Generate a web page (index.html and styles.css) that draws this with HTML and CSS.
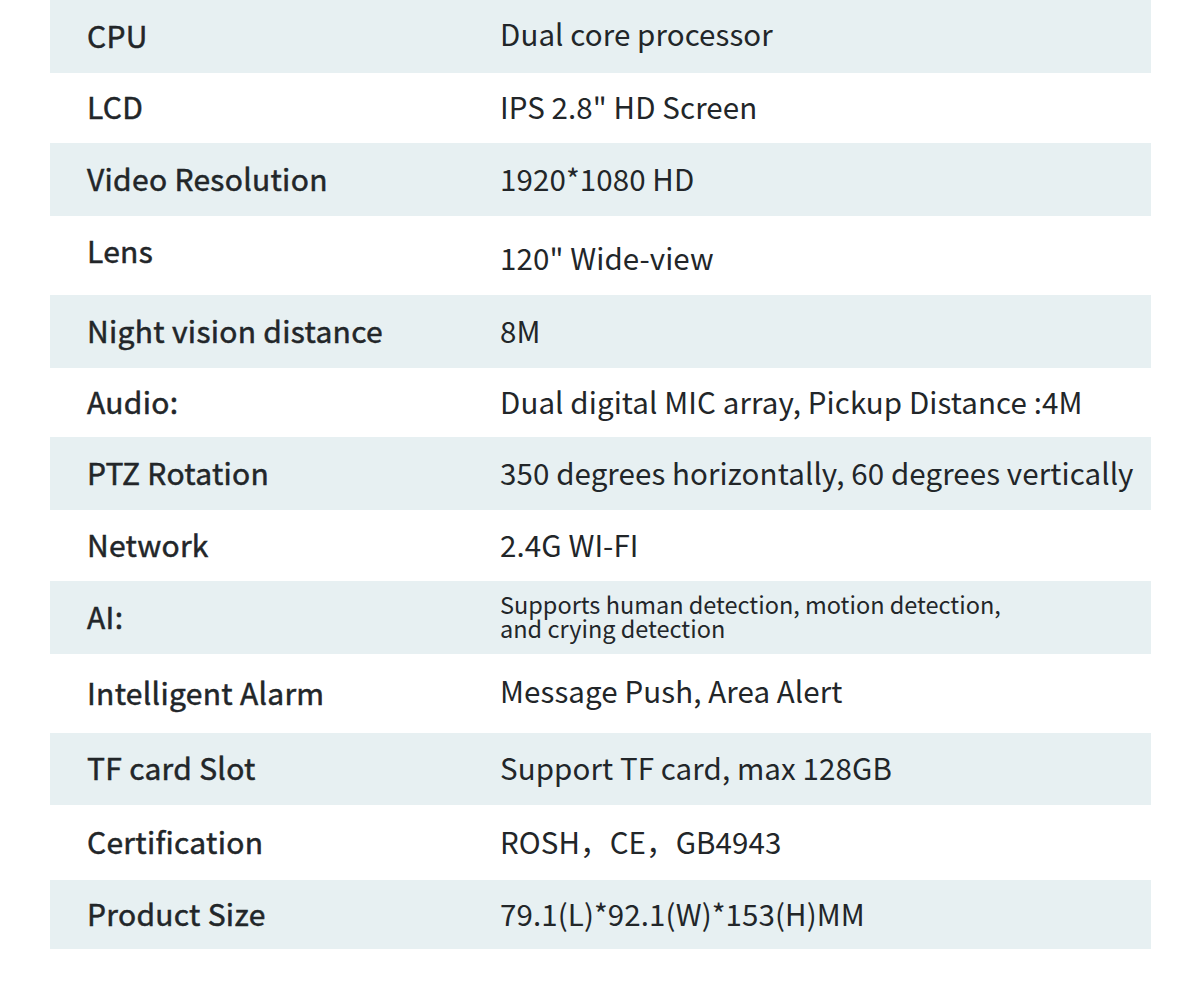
FILE: index.html
```html
<!DOCTYPE html>
<html>
<head>
<meta charset="utf-8">
<link rel="stylesheet" href="styles.css">
</head>
<body>
<div class="spec">
  <div class="row shade h73"><div class="k">CPU</div><div class="v up2">Dual core processor</div></div>
  <div class="row h70"><div class="k">LCD</div><div class="v">IPS 2.8" HD Screen</div></div>
  <div class="row shade h73"><div class="k">Video Resolution</div><div class="v">1920*1080 HD</div></div>
  <div class="row h79"><div class="k up4">Lens</div><div class="v down3">120" Wide-view</div></div>
  <div class="row shade h73"><div class="k">Night vision distance</div><div class="v">8M</div></div>
  <div class="row h69"><div class="k">Audio:</div><div class="v">Dual digital MIC array, Pickup Distance :4M</div></div>
  <div class="row shade h73"><div class="k">PTZ Rotation</div><div class="v">350 degrees horizontally, 60 degrees vertically</div></div>
  <div class="row h71"><div class="k">Network</div><div class="v">2.4G WI-FI</div></div>
  <div class="row shade h73"><div class="k">AI:</div><div class="v small">Supports human detection, motion detection,<br>and crying detection</div></div>
  <div class="row h79"><div class="k">Intelligent Alarm</div><div class="v up2">Message Push, Area Alert</div></div>
  <div class="row shade h72"><div class="k">TF card Slot</div><div class="v">Support TF card, max 128GB</div></div>
  <div class="row h75"><div class="k">Certification</div><div class="v">ROSH，CE，GB4943</div></div>
  <div class="row shade h69"><div class="k">Product Size</div><div class="v">79.1(L)*92.1(W)*153(H)MM</div></div>
</div>
</body>
</html>
```

FILE: styles.css
```css
html, body {
  margin: 0;
  padding: 0;
  background: #ffffff;
}
body {
  font-family: "Noto Sans CJK SC", "Noto Sans", sans-serif;
  color: #222629;
}
.spec {
  width: 1101px;
  margin-left: 50px;
  display: flex;
  flex-direction: column;
}
.row {
  display: grid;
  grid-template-columns: 450px 1fr;
  align-items: center;
}
.shade {
  background: #e7f0f2;
}
.h69 { height: 69px; }
.h70 { height: 70px; }
.h71 { height: 71px; }
.h72 { height: 72px; }
.h73 { height: 73px; }
.h75 { height: 75px; }
.h79 { height: 79px; }
.k {
  padding-left: 37px;
  padding-bottom: 4px;
  font-size: 30px;
  font-weight: 400;
  line-height: 36px;
  letter-spacing: 0.3px;
  -webkit-text-stroke: 0.5px #222629;
}
.v {
  padding-bottom: 4px;
  font-size: 29.5px;
  font-weight: 400;
  line-height: 36px;
  letter-spacing: 0.1px;
}
.v.small {
  font-size: 23.5px;
  line-height: 24px;
  letter-spacing: 0;
  padding-bottom: 4px;
}
.up2 { position: relative; top: -2px; }
.up4 { position: relative; top: -4px; }
.down3 { position: relative; top: 3px; }
```
